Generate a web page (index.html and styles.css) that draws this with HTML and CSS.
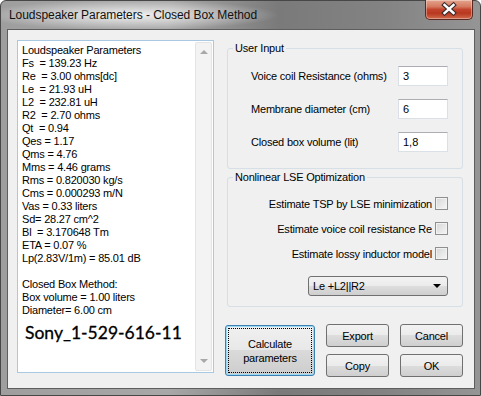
FILE: index.html
```html
<!DOCTYPE html>
<html>
<head>
    <title>Loudspeaker Parameters - Closed Box Method</title>
    <link rel="stylesheet" href="styles.css">
</head>
<body>
<div class="window">
    <div class="titlebar">
        <span class="title">Loudspeaker Parameters - Closed Box Method</span>
        <div class="close-btn">
            <svg width="46" height="19" viewBox="0 0 46 19">
                <path d="M18.5 5 L27.5 13 M27.5 5 L18.5 13" stroke="#3b2b2b" stroke-width="4.6" stroke-linecap="square"/>
                <path d="M18.5 5 L27.5 13 M27.5 5 L18.5 13" stroke="#ffffff" stroke-width="2.4" stroke-linecap="square"/>
            </svg>
        </div>
    </div>

    <div class="client">
        <div class="results">
<pre class="results-text">Loudspeaker Parameters
Fs  = 139.23 Hz
Re  = 3.00 ohms[dc]
Le  = 21.93 uH
L2  = 232.81 uH
R2  = 2.70 ohms
Qt  = 0.94
Qes = 1.17
Qms = 4.76
Mms = 4.46 grams
Rms = 0.820030 kg/s
Cms = 0.000293 m/N
Vas = 0.33 liters
Sd= 28.27 cm^2
Bl  = 3.170648 Tm
ETA = 0.07 %
Lp(2.83V/1m) = 85.01 dB

Closed Box Method:
Box volume = 1.00 liters
Diameter= 6.00 cm<div class="model">Sony_1-529-616-11</div></pre>
            <div class="scrollbar">
                <span class="arrow up"></span>
                <span class="arrow down"></span>
            </div>
        </div>

        <div class="side">
            <fieldset class="group user-input">
                <legend>User Input</legend>
                <div class="field">
                    <label for="re">Voice coil Resistance (ohms)</label>
                    <input type="text" id="re" value="3">
                </div>
                <div class="field">
                    <label for="diam">Membrane diameter (cm)</label>
                    <input type="text" id="diam" value="6">
                </div>
                <div class="field">
                    <label for="vol">Closed box volume (lit)</label>
                    <input type="text" id="vol" value="1,8">
                </div>
            </fieldset>

            <fieldset class="group lse">
                <legend>Nonlinear LSE Optimization</legend>
                <div class="lse-body">
                    <div class="check">Estimate TSP by LSE minimization <span class="box"></span></div>
                    <div class="check">Estimate voice coil resistance Re <span class="box"></span></div>
                    <div class="check">Estimate lossy inductor model <span class="box"></span></div>
                    <div class="combo">Le +L2||R2 <span class="caret"></span></div>
                </div>
            </fieldset>

            <div class="buttons">
                <button class="calc">Calculate<br>parameters</button>
                <div class="btn-grid">
                    <button>Export</button>
                    <button>Cancel</button>
                    <button>Copy</button>
                    <button>OK</button>
                </div>
            </div>
        </div>
    </div>
</div>
</body>
</html>
```

FILE: styles.css
```css
body { margin: 0; font-family: "Liberation Sans", Arial, sans-serif; font-size: 11px; letter-spacing: -0.2px; color: #000; }

.window {
    width: 481px;
    height: 396px;
    box-sizing: border-box;
    display: flex;
    flex-direction: column;
    padding: 0 5px 6px 6px;
    border: 1px solid #474747;
    border-radius: 6px 6px 0 0;
    background: linear-gradient(90deg, #9e9e9e 0%, #a8a8a8 35%, #7a7a7a 58%, #838383 80%, #959595 100%);
}

.titlebar {
    height: 28px;
    display: flex;
    justify-content: space-between;
    align-items: flex-start;
    background: radial-gradient(ellipse 150px 15px at 128px 14px, rgba(255,255,255,0.85), rgba(255,255,255,0));
    margin: 0 -5px 0 -6px;
    padding: 0 7px 0 8px;
}
.title {
    font-size: 12px;
    line-height: 28px;
    letter-spacing: -0.05px;
    color: #111;
}
.close-btn {
    width: 46px;
    height: 19px;
    margin-top: -1px;
    border: 1px solid #5a2a22;
    border-top: 0;
    border-radius: 0 0 5px 5px;
    background: linear-gradient(#e4a58f 0%, #d47a60 35%, #c2442c 50%, #b8381f 70%, #d06a4c 100%);
    box-shadow: inset 0 0 0 1px rgba(255,255,255,0.35);
}
.close-btn svg { display: block; }

.client {
    flex: 1;
    display: flex;
    gap: 11px;
    padding: 10px 11px 0 9px;
    background: #f0f0f0;
    border: 1px solid #5e5e5e;
}

/* results textbox */
.results {
    width: 197px;
    height: 333px;
    box-sizing: border-box;
    display: flex;
    background: #fff;
    border: 1px solid #a9c8e2;
}
.results-text {
    flex: 1;
    margin: 0;
    padding: 3px 0 0 4px;
    font-family: "Liberation Sans", Arial, sans-serif;
    font-size: 11px;
    line-height: 13px;
    white-space: pre;
    overflow: hidden;
}
.model {
    font-family: Lato, "Open Sans", sans-serif;
    font-size: 17.5px;
    letter-spacing: 0;
    line-height: 20px;
    margin: 6px 0 0 3px;
    -webkit-text-stroke: 0.3px #000;
}
.scrollbar {
    width: 15px;
    margin: 1px 1px 1px 0;
    display: flex;
    flex-direction: column;
    justify-content: space-between;
    align-items: center;
    background: #f3f3f3;
    border: 1px solid #e4e4e4;
    border-radius: 2px;
}
.arrow {
    width: 0;
    height: 0;
    border-left: 4px solid transparent;
    border-right: 4px solid transparent;
}
.arrow.up { border-bottom: 4px solid #a8a8a8; margin-top: 7px; }
.arrow.down { border-top: 4px solid #a8a8a8; margin-bottom: 7px; }

/* right column */
.side { width: 238px; display: flex; flex-direction: column; }

.group {
    margin: 2px 0 0 2px;
    padding: 11px 14px 16px 5px;
    border: 1px solid #d5dfe5;
    border-radius: 3px;
    min-width: 0;
}
.group legend {
    padding: 0 2px;
    line-height: 13px;
    color: #000;
}

.field {
    display: flex;
    justify-content: space-between;
    align-items: center;
    height: 20px;
    padding-left: 18px;
}
.field + .field { margin-top: 13px; }
.field input {
    width: 50px;
    height: 20px;
    box-sizing: border-box;
    border: 1px solid #dbdfe6;
    border-top-color: #abadb3;
    padding: 0 0 0 4px;
    font: 11px "Liberation Sans", Arial, sans-serif;
    color: #000;
    background: #fff;
}

.lse { padding: 12px 14px 10px 5px; }
.lse-body { display: flex; flex-direction: column; align-items: flex-end; }
.check {
    display: flex;
    align-items: center;
    height: 15px;
    gap: 3px;
}
.check + .check { margin-top: 10px; }
.box {
    width: 13px;
    height: 13px;
    box-sizing: border-box;
    border: 1px solid #8f8f8f;
    background: linear-gradient(135deg, #d6d6d6, #f6f6f6);
    box-shadow: inset 0 0 0 1px #f2f2f2;
}
.combo {
    margin-top: 15px;
    width: 140px;
    height: 20px;
    box-sizing: border-box;
    display: flex;
    justify-content: space-between;
    align-items: center;
    padding: 0 6px 0 4px;
    border: 1px solid #707070;
    border-radius: 3px;
    background: linear-gradient(#f2f2f2, #ebebeb 50%, #dddddd 50%, #cfcfcf);
}
.caret {
    width: 0;
    height: 0;
    border-left: 4px solid transparent;
    border-right: 4px solid transparent;
    border-top: 4px solid #000;
}

/* buttons */
.buttons { display: flex; gap: 11px; margin-top: 17px; }
button {
    font: 11px "Liberation Sans", Arial, sans-serif;
    letter-spacing: -0.2px;
    color: #000;
    padding: 0;
    border: 1px solid #707070;
    border-radius: 3px;
    background: linear-gradient(#f2f2f2, #ebebeb 50%, #dddddd 50%, #cfcfcf);
}
.calc {
    width: 90px;
    height: 51px;
    margin-top: 1px;
    line-height: 14px;
    border-color: #3c7fb1;
    box-shadow: inset 0 0 0 1px #9ad8f5;
    outline: 1px dotted #000;
    outline-offset: -4px;
    background: linear-gradient(#f0f0f0, #e8e8e8 50%, #dadada 50%, #cdcdcd);
}
.btn-grid {
    display: grid;
    grid-template-columns: 63px 63px;
    grid-template-rows: 23px 23px;
    column-gap: 11px;
    row-gap: 7px;
}
```
